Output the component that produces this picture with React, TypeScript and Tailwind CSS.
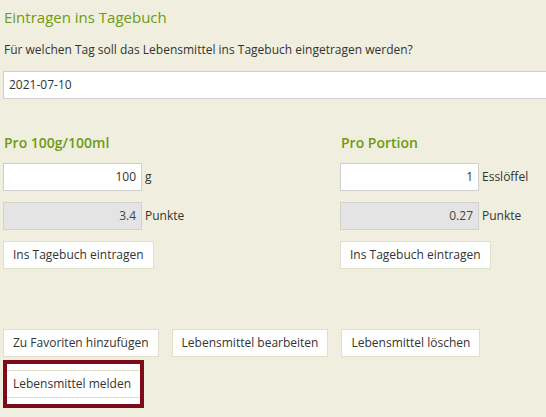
import React from "react";

const font = { fontFamily: '"Open Sans", "Liberation Sans", sans-serif' };

function Btn({ children }: { children: React.ReactNode }) {
  return (
    <button className="h-[28px] px-[9px] bg-white border border-[#e0dfc8] text-[12px] text-[#333] leading-none whitespace-nowrap">
      {children}
    </button>
  );
}

function Column({ title, value, unit, points }: { title: string; value: string; unit: string; points: string }) {
  return (
    <div className="w-[337px] flex flex-col">
      <h3 className="text-[14px] font-semibold text-[#6e9a14] h-[18px] leading-[18px] ml-[1px]">{title}</h3>
      <div className="flex items-center mt-[11px] h-[28px]">
        <div className="w-[139px] h-[28px] bg-white border border-[#cfcfcf] flex items-center justify-end pr-[5px] text-[12px] text-[#333]">
          {value}
        </div>
        <span className="ml-[3px] text-[12px] text-[#333]">{unit}</span>
      </div>
      <div className="flex items-center mt-[11px] h-[28px]">
        <div className="w-[139px] h-[28px] bg-[#e4e4e4] border border-[#d2d2cc] flex items-center justify-end pr-[5px] text-[12px] text-[#444]">
          {points}
        </div>
        <span className="ml-[3px] text-[12px] text-[#333]">Punkte</span>
      </div>
      <div className="mt-[11px] flex">
        <Btn>Ins Tagebuch eintragen</Btn>
      </div>
    </div>
  );
}

export default function App() {
  return (
    <div className="w-[546px] h-[417px] overflow-hidden bg-[#f0efdf]" style={font}>
      <div className="w-[680px] pl-[3px]">
        <h2 className="text-[15px] text-[#6e9a14] h-[20px] leading-[20px] mt-[7px] ml-[1px]">Eintragen ins Tagebuch</h2>
        <p className="text-[12px] text-[#333] mt-[14px] h-[18px] leading-[18px] ml-[1px]">
          Für welchen Tag soll das Lebensmittel ins Tagebuch eingetragen werden?
        </p>
        <div className="mt-[12px] h-[28px] w-[674px] bg-white border border-[#cfcfcf] flex items-center pl-[5px] text-[12px] text-[#333]">
          2021-07-10
        </div>
        <div className="flex mt-[35px]">
          <Column title="Pro 100g/100ml" value="100" unit="g" points="3.4" />
          <Column title="Pro Portion" value="1" unit="Esslöffel" points="0.27" />
        </div>
        <div className="flex gap-[13px] mt-[60px]">
          <Btn>Zu Favoriten hinzufügen</Btn>
          <Btn>Lebensmittel bearbeiten</Btn>
          <Btn>Lebensmittel löschen</Btn>
        </div>
        <div className="mt-[3px] flex">
          <div className="border-[4px] border-[#7d0b1c] bg-white py-[6px] w-[141px]">
            <div className="border-y border-[#e0dfc8] h-[28px] flex items-center pl-[6px] text-[12px] text-[#333] whitespace-nowrap">
              Lebensmittel melden
            </div>
          </div>
        </div>
      </div>
    </div>
  );
}
